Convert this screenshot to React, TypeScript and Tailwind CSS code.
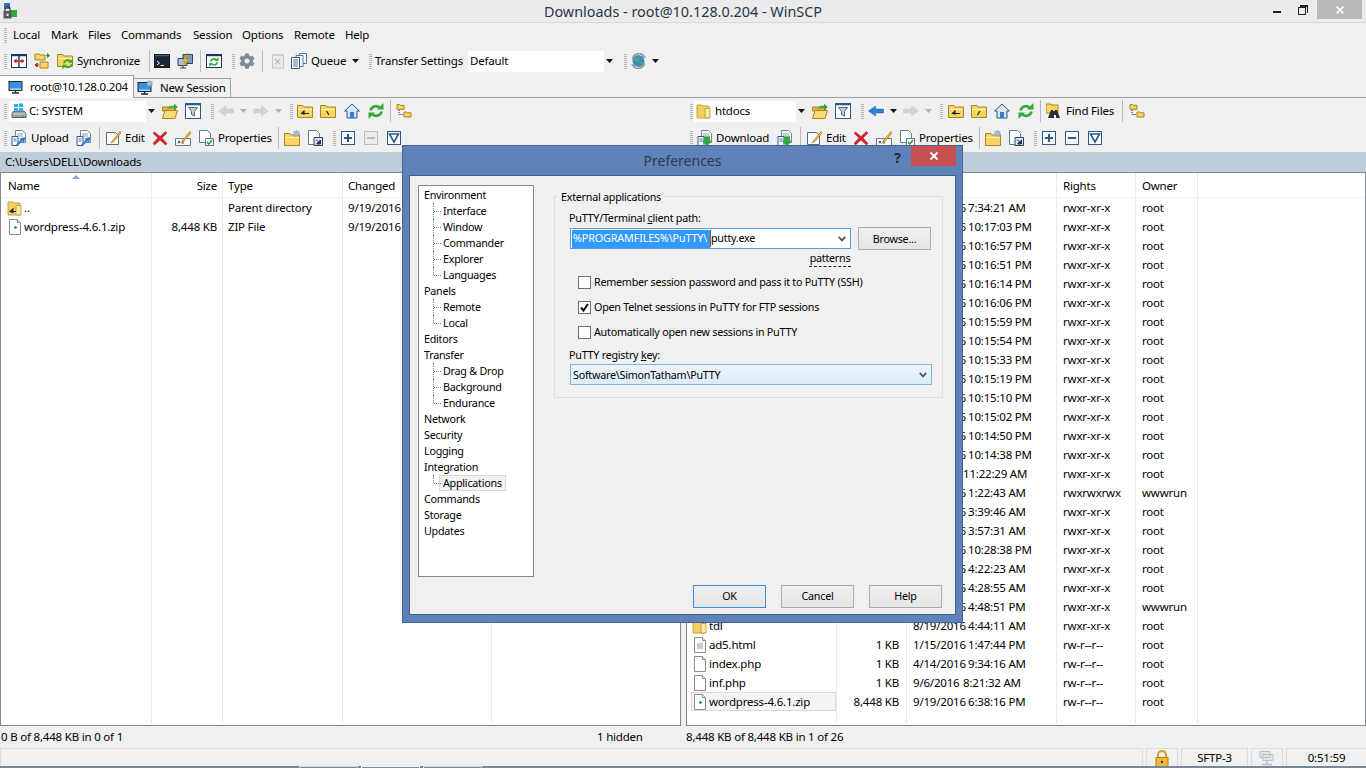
import type { ReactNode } from "react";
import clsx from "clsx";
import { FaCog } from "react-icons/fa";

type IcProps = { className?: string; children?: ReactNode };

function Ic({ className, children }: IcProps) {
  return (
    <svg viewBox="0 0 16 16" className={clsx("h-4 w-4 shrink-0", className)}>
      {children}
    </svg>
  );
}

const Body = ({ x = 0, y = 0 }: { x?: number; y?: number }) => (
  <g transform={`translate(${x} ${y})`}>
    <path d="M.5 2.5h5.5l1 1.5h8.5v10.5H.5z" fill="#f7d560" stroke="#a9861f" />
    <path d="M1.5 6.5h13.5" stroke="#fff3b8" />
  </g>
);

const Arrows = ({ color = "#35a83a" }: { color?: string }) => (
  <g fill="none" stroke={color} strokeWidth="2.6">
    <path d="M2.5 7.5a5.5 5.5 0 0 1 9-3" />
    <path d="M13.5 8.5a5.5 5.5 0 0 1-9 3" />
    <path d="M9 6.5h6.5V0z" fill={color} stroke="none" />
    <path d="M7 9.5H.5V16z" fill={color} stroke="none" />
  </g>
);

const Compare = ({ className }: IcProps) => (
  <Ic className={className}>
    <rect x=".5" y="1.5" width="15" height="13" fill="#fff" stroke="#17375e" />
    <path d="M.5 2.5h15M8 2v12" stroke="#17375e" strokeWidth="1.4" />
    <path d="M3.5 8h9" stroke="#c0242b" strokeWidth="1.6" />
    <path d="M5.5 5.5 2.5 8l3 2.5zM10.5 5.5l3 2.5-3 2.5z" fill="#c0242b" />
  </Ic>
);
const SyncDirs = ({ className }: IcProps) => (
  <Ic className={className}>
    <path d="M1 1h4l1 1h5v5H1z" fill="#f7d560" stroke="#a9861f" />
    <path d="M6 9h8v6H6z" fill="#f7d560" stroke="#a9861f" />
    <path d="M12 2.5h3.5M15.5 2.5l-2-2v4z" stroke="#2fa037" fill="#2fa037" />
    <path d="M1 12h4M1 12l2.2-2v4z" stroke="#c0242b" fill="#c0242b" />
  </Ic>
);
const SyncFolder = ({ className }: IcProps) => (
  <Ic className={className}>
    <Body y={-1} />
    <g transform="translate(5 5) scale(.72)">
      <Arrows />
    </g>
  </Ic>
);
const Terminal = ({ className }: IcProps) => (
  <Ic className={className}>
    <rect x=".5" y="1.5" width="15" height="13" fill="#1d2733" stroke="#0f1620" />
    <path d="M1 2.5h14" stroke="#3f5f86" strokeWidth="1.4" />
    <path d="M3 8l2.5 2L3 12M6.5 12.5H10" stroke="#e8edf2" fill="none" />
  </Ic>
);
const Putty = ({ className }: IcProps) => (
  <Ic className={className}>
    <path d="M6 1.5h9.5v9H6z" fill="#7d9cc4" stroke="#2c4366" />
    <path d="M1 5.5h9v7H1z" fill="#a9c3e0" stroke="#2c4366" />
    <path d="M3 15h6M6 12.5V15" stroke="#2c4366" />
    <path d="M10.5 0 5.5 8h2.7L6 14l6-8H9z" fill="#f3c11b" stroke="#a87f06" strokeWidth=".5" />
  </Ic>
);
const RefreshBox = ({ className }: IcProps) => (
  <Ic className={className}>
    <rect x=".5" y="1.5" width="15" height="13" fill="#fff" stroke="#17375e" />
    <path d="M.5 2.5h15" stroke="#17375e" strokeWidth="1.4" />
    <g transform="translate(3 4) scale(.62)">
      <Arrows />
    </g>
  </Ic>
);
const QueueLog = ({ className }: IcProps) => (
  <Ic className={className}>
    <path d="M2.5 2h11v13h-11z" fill="#ececec" stroke="#c6c6c6" />
    <path d="M4 1v2M7 1v2M10 1v2M12.5 1v2" stroke="#b5b5b5" />
    <path d="M5 6l5 5M10 6l-5 5" stroke="#bdbdbd" strokeWidth="1.5" />
  </Ic>
);
const QueueDocs = ({ className }: IcProps) => (
  <Ic className={className}>
    <path d="M8.5.5h7v10h-7z" fill="#fff" stroke="#4b76a8" />
    <path d="M5 2.5h7v11H5z" fill="#fff" stroke="#4b76a8" />
    <path d="M.5 4.5h8v11h-8z" fill="#fff" stroke="#2f5b8e" />
    <path d="M2 7h5M2 9h5M2 11h5M2 13h5" stroke="#4b76a8" />
  </Ic>
);
const Globe = ({ className }: IcProps) => (
  <Ic className={clsx("w-[17px]", className)}>
    <circle cx="8" cy="8" r="6" fill="#3f86c9" />
    <path d="M5 4l3 1 1 2-2 2-3-1zM10 9l3 1-2 3z" fill="#59ad3e" />
    <path d="M2 6a6.5 6.5 0 0 1 11-3.5M14 10a6.5 6.5 0 0 1-11 3.5" stroke="#8c9aa8" strokeWidth="1.6" fill="none" />
    <path d="M12 .5v4.2h3.8zM4 15.5v-4.2H.2z" fill="#8c9aa8" />
  </Ic>
);
const Monitor = ({ className, star }: IcProps & { star?: boolean }) => (
  <Ic className={className}>
    <rect x="1" y="2.5" width="13" height="9" fill="#3b8fe0" stroke="#1f2a38" />
    <path d="M2 9.5h11v1.5H2z" fill="#a9d3f7" />
    <path d="M7.5 11.5v2M4 14h7" stroke="#1f2a38" strokeWidth="1.4" />
    {star && <path d="M12.5 0l.9 1.8 1.9-.5-.6 1.9 1.3 1-1.8.6v1.9l-1.7-1-1.7 1v-1.9l-1.8-.6 1.3-1-.6-1.9 1.9.5z" fill="#a8bed6" stroke="#6f8aa8" strokeWidth=".4" />}
  </Ic>
);
const Drive = ({ className }: IcProps) => (
  <Ic className={className}>
    <path d="M1 10.5 3 8h10l2 2.5v4H1z" fill="#9aa3ab" stroke="#555e66" />
    <path d="M1.5 11h13" stroke="#d5dade" />
    <path d="M11 12.5h2.5" stroke="#3dbb45" strokeWidth="1.2" />
    <path d="M3 1h4v3H3zM8 .5h4v3.5H8zM3 5h4v2.5H3zM8 5h4v2.5H8z" fill="#1bb4ec" />
  </Ic>
);
const OpenFolder = ({ className }: IcProps) => (
  <Ic className={className}>
    <path d="M.5 4h5.5l1 1h6.5v3H.5z" fill="#e2b93d" stroke="#a9861f" />
    <path d="M3 7.5h12.5l-2.5 8H.5z" fill="#f8dc78" stroke="#a9861f" />
    <path d="M5 6c1-3 4-4 7-3V.6l3.8 3.4L12 7.4V5c-3-.5-5 0-7 1z" fill="#3aa63f" />
  </Ic>
);
const Funnel = ({ className, gray }: IcProps & { gray?: boolean }) => (
  <Ic className={className}>
    <rect x=".5" y=".5" width="15" height="15" fill="#fff" stroke={gray ? "#b9b9b9" : "#2c5a8c"} />
    <path d="M.5 1.5h15" stroke={gray ? "#b9b9b9" : "#2c5a8c"} strokeWidth="1.6" />
    <path d="M3.5 4.5h9l-3 4v4.5l-3-1.5v-3z" fill="#c5cbd2" stroke="#5d6670" />
  </Ic>
);
const BackArrow = ({ className, on }: IcProps & { on?: boolean }) => (
  <Ic className={className}>
    <path d="M.5 8 7.5 3v3h8v4h-8v3z" fill={on ? "#2e7fd6" : "#d2d2d2"} stroke={on ? "#1d5da8" : "#c6c6c6"} strokeWidth=".5" />
  </Ic>
);
const FwdArrow = ({ className }: IcProps) => (
  <Ic className={className}>
    <path d="M15.5 8 8.5 3v3h-8v4h8v3z" fill="#d2d2d2" stroke="#c6c6c6" strokeWidth=".5" />
  </Ic>
);
const UpFolder = ({ className }: IcProps) => (
  <Ic className={className}>
    <Body />
    <path d="M7 8 4.5 10.5 7 11zM5 10.5h7" stroke="#1f2a38" fill="#1f2a38" strokeWidth="1.1" />
  </Ic>
);
const RootFolder = ({ className, slash }: IcProps & { slash?: string }) => (
  <Ic className={className}>
    <Body />
    <path d={slash === "/" ? "M6.5 12 9 8" : "M6.5 8 9 12"} stroke="#1f2a38" strokeWidth="1.2" />
  </Ic>
);
const Home = ({ className }: IcProps) => (
  <Ic className={className}>
    <path d="M8 1 .5 8H3v7h10V8h2.5z" fill="#d7e4f2" stroke="#32597f" />
    <path d="M6 9h4v6H6z" fill="#2e7fd6" />
  </Ic>
);
const Refresh = ({ className }: IcProps) => (
  <Ic className={className}>
    <Arrows />
  </Ic>
);
const Tree = ({ className }: IcProps) => (
  <Ic className={clsx("w-[18px]", className)}>
    <path d="M1 1.5h2.5l.7.8H8v4H1z" fill="#f7d560" stroke="#a9861f" />
    <path d="M8 9h2.5l.7.8H15v4.2H8z" fill="#f7d560" stroke="#a9861f" />
    <path d="M3 7v4.5h4" stroke="#222" strokeDasharray="1 1" fill="none" />
  </Ic>
);
const Transfer = ({ className, green, faded }: IcProps & { green?: boolean; faded?: boolean }) => (
  <Ic className={className}>
    <path d="M4.5.5h7l3 3v9h-10z" fill={faded ? "#f7f7f7" : "#fff"} stroke="#7a8793" />
    <path d="M6 4h6M6 6h6" stroke="#8ca3bb" />
    <path d="M1 6.5h6v9H1z" fill="#fff" stroke="#2f5b8e" />
    <path d="M2.5 9h3M2.5 11h3" stroke="#4b76a8" />
    {green ? (
      <path d="M7 16v-4H4.5L10 6.5l5.5 5.5H13v4z" transform="rotate(180 10 11.25)" fill="#35a83a" />
    ) : (
      <path d="M14.5 7 8.5 8.5l1.3 1.3L5 14.5 6.5 16l4.8-4.7 1.7 1.7z" fill="#2e7fd6" />
    )}
  </Ic>
);
const Pencil = () => <path d="M15 1.5 8 10 6 13l3-1.5L15.8 3.2z" fill="#f3b93b" stroke="#9b6a10" strokeWidth=".6" />;
const Edit = ({ className }: IcProps) => (
  <Ic className={className}>
    <path d="M1.5 2.5h9l3 3v9h-12z" fill="#fff" stroke="#4b6a8c" />
    <Pencil />
  </Ic>
);
const Del = ({ className }: IcProps) => (
  <Ic className={className}>
    <path d="M2.5 2 8 6.5 13.5 1.5l1.5 1.5L10 8l5 5.5-1.5 1.5L8 10l-5.5 5L1 13.2 6 8 1 3.2z" fill="#d4242a" stroke="#a81b20" strokeWidth=".5" />
  </Ic>
);
const Rename = ({ className }: IcProps) => (
  <Ic className={className}>
    <path d="M.5 8.5h15v7H.5z" fill="#fff" stroke="#5d7a99" />
    <path d="M3 11l2 2.5M5 11l-2 2.5M8 10v4" stroke="#2c4366" />
    <Pencil />
  </Ic>
);
const Props = ({ className }: IcProps) => (
  <Ic className={className}>
    <path d="M1.5.5h8l3 3v9h-11z" fill="#fff" stroke="#5d7a99" />
    <path d="M7.5 8.5h8v7h-8z" fill="#f4f7fa" stroke="#5d7a99" />
    <path d="M9 12l1.8 2L14 10" stroke="#31a035" strokeWidth="1.6" fill="none" />
  </Ic>
);
const NewFolder = ({ className }: IcProps) => (
  <Ic className={className}>
    <Body y={1} />
    <path d="M12.5 0l.9 1.8 1.9-.5-.6 1.9 1.3 1-1.8.6v1.9l-1.7-1-1.7 1v-1.9l-1.8-.6 1.3-1-.6-1.9 1.9.5z" fill="#a8bed6" stroke="#6f8aa8" strokeWidth=".4" />
  </Ic>
);
const Shortcut = ({ className }: IcProps) => (
  <Ic className={className}>
    <path d="M1.5.5h8l3 3v11h-11z" fill="#fff" stroke="#5d7a99" />
    <path d="M7 7.5h8.5v8H7z" fill="#dfe7ef" stroke="#2c4366" />
    <path d="M9 9.5l4 4M13.5 10v4h-4z" stroke="#17375e" fill="#17375e" />
  </Ic>
);
const SqPlus = ({ className, minus, gray }: IcProps & { minus?: boolean; gray?: boolean }) => {
  const c = gray ? "#bdbdbd" : "#2c5a8c";
  return (
    <svg viewBox="0 0 14 14" className={clsx("h-[14px] w-[14px] shrink-0", className)}>
      <rect x=".5" y=".5" width="13" height="13" fill={gray ? "#ececec" : "#f7fafd"} stroke={c} />
      <path d={minus ? "M3 7h8" : "M3 7h8M7 3v8"} stroke={c} strokeWidth="2" />
    </svg>
  );
};
const SqFilter = ({ className }: IcProps) => (
  <svg viewBox="0 0 14 14" className={clsx("h-[14px] w-[14px] shrink-0", className)}>
    <rect x=".5" y=".5" width="13" height="13" fill="#f7fafd" stroke="#2c5a8c" />
    <path d="M2.5 3h9L7 11z" fill="#fff" stroke="#2c5a8c" strokeWidth="1.6" />
  </svg>
);
const Binoculars = ({ className }: IcProps) => (
  <Ic className={className}>
    <path d="M0 1h5l1 1h6v8H0z" fill="#f7d560" stroke="#a9861f" />
    <path d="M5 7h2v1h2V7h2l3 8H10v-3H8v3H2z" fill="#2b2f35" />
  </Ic>
);
const FileZip = ({ className }: IcProps) => (
  <Ic className={className}>
    <path d="M2.5.5h8l3 3v12h-11z" fill="#fff" stroke="#8b8b8b" />
    <path d="M10.5.5v3h3" fill="#eee" stroke="#8b8b8b" />
    <path d="M7 8.5h3M8.5 7v3" stroke="#26a635" strokeWidth="1.3" />
  </Ic>
);
const FilePlain = ({ className, lines }: IcProps & { lines?: boolean }) => (
  <Ic className={className}>
    <path d="M2.5.5h8l3 3v12h-11z" fill="#fff" stroke="#8b8b8b" />
    <path d="M10.5.5v3h3" fill="#eee" stroke="#8b8b8b" />
    {lines && <path d="M5 7h6M5 9h6M5 11h6" stroke="#9a9a9a" />}
  </Ic>
);
const FolderPlain = ({ className, parent }: IcProps & { parent?: boolean }) => (
  <Ic className={className}>
    <path d="M1 2h5l1 1h6v12H1z" fill="#f3cf63" stroke="#c9a23a" />
    <path d="M9 5.5h5v9.5H9z" fill="#fbe9a6" stroke="#c9a23a" />
    {parent && <path d="M6 9 3 11.5 6 12.5zM4 11.5h5" stroke="#1f2a38" fill="#1f2a38" strokeWidth="1.1" />}
  </Ic>
);
const Lock = ({ className }: IcProps) => (
  <svg viewBox="0 0 14 18" className={clsx("h-[18px] w-[14px] shrink-0", className)}>
    <path d="M3 8V5a4 4 0 0 1 8 0v3" fill="none" stroke="#d6a21e" strokeWidth="2" />
    <rect x="1" y="7.5" width="12" height="10" fill="#f0b93a" stroke="#b57f12" />
    <circle cx="7" cy="12" r="1.2" fill="#5a3f08" />
  </svg>
);
const Network = ({ className }: IcProps) => (
  <Ic className={className}>
    <path d="M1 1.5h10v6H1zM4 4.5h10v6H4z" fill="#dfe3e6" stroke="#b9bfc4" />
    <path d="M8 10.5v3M3 14.5h10" stroke="#b9bfc4" strokeWidth="1.6" />
  </Ic>
);
const AppIcon = () => (
  <svg viewBox="0 0 16 16" className="h-4 w-4">
    <path d="M2 0h6v6H2z" fill="#2e6fd0" />
    <path d="M8 7h7v7H8z" fill="#35a83a" />
    <path d="M3 8V6a2.5 2.5 0 0 1 5 0v2" stroke="#444" strokeWidth="1.3" fill="none" />
    <rect x="1.5" y="8" width="8" height="7.5" fill="#55585c" />
    <rect x="4.5" y="10.5" width="2" height="2.5" fill="#ddd" />
  </svg>
);

const Caret = ({ className }: IcProps) => (
  <svg viewBox="0 0 7 4" className={clsx("h-1 w-[7px] shrink-0", className)}>
    <path d="M0 0h7L3.5 4z" fill="#111" />
  </svg>
);
const GrayCaret = ({ className }: IcProps) => (
  <svg viewBox="0 0 7 4" className={clsx("h-1 w-[7px] shrink-0", className)}>
    <path d="M0 0h7L3.5 4z" fill="#b0b0b0" />
  </svg>
);
const Chevron = ({ className }: IcProps) => (
  <svg viewBox="0 0 8 6" className={clsx("h-[6px] w-2 shrink-0", className)}>
    <path d="M.8.8 4 4.4 7.2.8" fill="none" stroke="#555" strokeWidth="1.8" />
  </svg>
);

const Grip = ({ className }: IcProps) => (
  <div
    className={clsx(
      "h-[15px] w-[3px] shrink-0 bg-[repeating-linear-gradient(to_bottom,#b4b4b4_0,#b4b4b4_1px,transparent_1px,transparent_2px)]",
      className,
    )}
  />
);
const Sep = ({ className }: IcProps) => <div className={clsx("h-[22px] w-px shrink-0 bg-[#b9b9b9]", className)} />;

const Label = ({ className, children }: IcProps) => (
  <span className={clsx("shrink-0 whitespace-nowrap", className)}>{children}</span>
);

function Combo({ className, icon, text, iconGap }: { className: string; icon: ReactNode; text: string; iconGap: string }) {
  return (
    <div className={clsx("flex h-[21px] shrink-0 items-center bg-white", className)}>
      <span className="ml-[2px] shrink-0">{icon}</span>
      <span className={clsx("flex-1 whitespace-nowrap", iconGap)}>{text}</span>
      <span className="flex h-full w-[11px] items-center justify-center bg-[#f0f0f0]">
        <Caret />
      </span>
    </div>
  );
}

function FileOps({ minusGray }: { minusGray?: boolean }) {
  return (
    <>
      <Sep className="ml-[7px]" />
      <Edit className="ml-[5px]" />
      <Label className="ml-[4px] w-[20px]">Edit</Label>
      <Del className="ml-[7px]" />
      <Rename className="ml-[7px]" />
      <Props className="ml-[7px]" />
      <Label className="ml-[4px] w-[53px]">Properties</Label>
      <Sep className="ml-[7px]" />
      <NewFolder className="ml-[5px]" />
      <Shortcut className="ml-[7px]" />
      <Grip className="ml-[10px]" />
      <SqPlus className="ml-[5px]" />
      <SqPlus minus gray={minusGray} className="ml-[9px]" />
      <SqFilter className="ml-[9px]" />
    </>
  );
}

type Col = { width: string; align?: string };

const leftCols: Col[] = [
  { width: "w-[151px] pl-[7px]" },
  { width: "w-[71px] pr-[5px]", align: "text-right" },
  { width: "w-[120px] pl-[5px]" },
  { width: "w-[149px] pl-[5px]" },
];
const remoteCols: Col[] = [
  { width: "w-[150px] pl-[5px]" },
  { width: "w-[70px] pr-[7px]", align: "text-right" },
  { width: "w-[150px] pl-[6px]" },
  { width: "w-[79px] pl-[6px]" },
  { width: "w-[62px] pl-[6px]" },
];

function HeaderRow({ cols, titles }: { cols: Col[]; titles: string[] }) {
  return (
    <div className="flex h-[25px] shrink-0 border-b border-[#eef3f9]">
      {cols.map((c, i) => (
        <div
          key={titles[i]}
          className={clsx("flex items-center whitespace-nowrap border-r border-[#e4ebf4] pt-px", c.width, c.align === "text-right" && "justify-end")}
        >
          {titles[i]}
        </div>
      ))}
      <div className="flex-1" />
    </div>
  );
}

function Filler({ cols }: { cols: Col[] }) {
  return (
    <div className="flex min-h-0 flex-1 pb-[2px]">
      {cols.map((c, i) => (
        <div key={i} className={clsx("border-r border-[#e4ebf4]", c.width)} />
      ))}
    </div>
  );
}

function Cells({ cols, cells }: { cols: Col[]; cells: ReactNode[] }) {
  return (
    <div className="flex h-[19px] shrink-0">
      {cols.map((c, i) => (
        <div key={i} className={clsx("flex items-center whitespace-nowrap border-r border-[#e4ebf4]", c.width, c.align === "text-right" && "justify-end")}>
          {cells[i]}
        </div>
      ))}
    </div>
  );
}

const When = ({ d, t, short }: { d: string; t: string; short?: boolean }) => (
  <>
    <span className={short ? "w-[50px]" : "w-[55px]"}>{d}</span>
    <span>{t}</span>
  </>
);

const hiddenRows: [string, string, string?, string?, boolean?][] = [
  ["9/18/2016", "7:34:21 AM"],
  ["9/18/2016", "10:17:03 PM"],
  ["9/18/2016", "10:16:57 PM"],
  ["9/18/2016", "10:16:51 PM"],
  ["9/18/2016", "10:16:14 PM"],
  ["9/18/2016", "10:16:06 PM"],
  ["9/18/2016", "10:15:59 PM"],
  ["9/18/2016", "10:15:54 PM"],
  ["9/18/2016", "10:15:33 PM"],
  ["9/18/2016", "10:15:19 PM"],
  ["9/18/2016", "10:15:10 PM"],
  ["9/18/2016", "10:15:02 PM"],
  ["9/18/2016", "10:14:50 PM"],
  ["9/18/2016", "10:14:38 PM"],
  ["9/6/2016", "11:22:29 AM", "rwxr-xr-x", "root", true],
  ["9/18/2016", "1:22:43 AM", "rwxrwxrwx", "wwwrun"],
  ["9/18/2016", "3:39:46 AM"],
  ["9/18/2016", "3:57:31 AM"],
  ["9/18/2016", "10:28:38 PM"],
  ["9/18/2016", "4:22:23 AM"],
  ["9/18/2016", "4:28:55 AM"],
  ["9/18/2016", "4:48:51 PM", "rwxr-xr-x", "wwwrun"],
];

function NameCell({ icon, name, selected, shift }: { icon: ReactNode; name: string; selected?: boolean; shift: string }) {
  return (
    <div className={clsx("flex h-full flex-1 items-center border", shift, selected ? "border-[#d9d9d9] bg-[#f5f5f5]" : "border-transparent")}>
      {icon}
      <span className="ml-[1px]">{name}</span>
    </div>
  );
}

function LeftPane() {
  return (
    <div className="flex w-[681px] shrink-0 flex-col">
      <div className="flex h-[26px] shrink-0 items-center">
        <Grip className="ml-[4px]" />
        <Combo className="ml-[2px] w-[148px]" icon={<Drive />} text="C: SYSTEM" iconGap="ml-[2px]" />
        <OpenFolder className="ml-[5px]" />
        <Funnel className="ml-[7px]" />
        <Grip className="ml-[10px]" />
        <BackArrow className="ml-[4px]" />
        <GrayCaret className="ml-[6px]" />
        <FwdArrow className="ml-[6px]" />
        <GrayCaret className="ml-[6px]" />
        <Grip className="ml-[8px]" />
        <UpFolder className="ml-[4px]" />
        <RootFolder className="ml-[7px]" />
        <Home className="ml-[8px]" />
        <Refresh className="ml-[8px]" />
        <Sep className="ml-[6px]" />
        <Tree className="ml-[4px]" />
      </div>
      <div className="flex h-[28px] shrink-0 items-center">
        <Grip className="ml-[4px]" />
        <Transfer className="ml-[4px]" />
        <Label className="ml-[4px] w-[38px]">Upload</Label>
        <Transfer faded className="ml-[7px]" />
        <FileOps minusGray />
      </div>
      <div className="flex h-[20px] shrink-0 items-center bg-[#bfccd9] pl-[5px]">C:\Users\DELL\Downloads</div>
      <div className="relative flex min-h-0 flex-1 flex-col border border-[#82878f] bg-white">
        <HeaderRow cols={leftCols} titles={["Name", "Size", "Type", "Changed"]} />
        <Cells
          cols={leftCols}
          cells={[<NameCell key="n" shift="-ml-[2px]" icon={<FolderPlain parent />} name=".." />, "", "Parent directory", "9/19/2016"]}
        />
        <Cells
          cols={leftCols}
          cells={[<NameCell key="n" shift="-ml-[2px]" icon={<FileZip />} name="wordpress-4.6.1.zip" />, "8,448 KB", "ZIP File", "9/19/2016"]}
        />
        <Filler cols={leftCols} />
        {/* sort mark sits on top of the header cell */}
        <svg viewBox="0 0 8 4" className="absolute left-[71px] top-[2px] h-1 w-2">
          <path d="M0 4h8L4 0z" fill="#7fa8cc" />
        </svg>
      </div>
      <div className="flex h-[22px] shrink-0 items-center pl-px">
        <span className="w-[596px]">0 B of 8,448 KB in 0 of 1</span>
        <span>1 hidden</span>
      </div>
    </div>
  );
}

function RightPane() {
  return (
    <div className="flex min-w-0 flex-1 flex-col">
      <div className="flex h-[26px] shrink-0 items-center">
        <Grip className="ml-[4px]" />
        <Combo className="ml-[1px] w-[113px]" icon={<FolderPlain />} text="htdocs" iconGap="ml-[3px]" />
        <OpenFolder className="ml-[5px]" />
        <Funnel className="ml-[7px]" />
        <Grip className="ml-[10px]" />
        <BackArrow on className="ml-[4px]" />
        <Caret className="ml-[6px]" />
        <FwdArrow className="ml-[6px]" />
        <GrayCaret className="ml-[6px]" />
        <Grip className="ml-[8px]" />
        <UpFolder className="ml-[5px]" />
        <RootFolder slash="/" className="ml-[7px]" />
        <Home className="ml-[7px]" />
        <Refresh className="ml-[8px]" />
        <Sep className="ml-[6px]" />
        <Binoculars className="ml-[5px]" />
        <Label className="ml-[4px] w-[49px]">Find Files</Label>
        <Sep className="ml-[7px]" />
        <Tree className="ml-[5px]" />
      </div>
      <div className="flex h-[28px] shrink-0 items-center">
        <Grip className="ml-[4px]" />
        <Transfer green className="ml-[4px]" />
        <Label className="ml-[3px] w-[54px]">Download</Label>
        <Transfer green faded className="ml-[7px]" />
        <FileOps />
      </div>
      <div className="h-[20px] shrink-0 bg-[#bfccd9]" />
      <div className="flex min-h-0 flex-1 flex-col border border-[#82878f] bg-white">
        <HeaderRow cols={remoteCols} titles={["Name", "Size", "Changed", "Rights", "Owner"]} />
        {hiddenRows.map(([d, t, rights, owner, short]) => (
          <Cells
            key={t}
            cols={remoteCols}
            cells={["", "", <When key="w" d={d} t={t} short={short} />, rights ?? "rwxr-xr-x", owner ?? "root"]}
          />
        ))}
        <Cells
          cols={remoteCols}
          cells={[<NameCell key="n" shift="-ml-[1px]" icon={<FolderPlain />} name="tdl" />, "", <When key="w" d="8/19/2016" t="4:44:11 AM" />, "rwxr-xr-x", "root"]}
        />
        <Cells
          cols={remoteCols}
          cells={[<NameCell key="n" shift="-ml-[1px]" icon={<FilePlain lines />} name="ad5.html" />, "1 KB", <When key="w" d="1/15/2016" t="1:47:44 PM" />, "rw-r--r--", "root"]}
        />
        <Cells
          cols={remoteCols}
          cells={[<NameCell key="n" shift="-ml-[1px]" icon={<FilePlain />} name="index.php" />, "1 KB", <When key="w" d="4/14/2016" t="9:34:16 AM" />, "rw-r--r--", "root"]}
        />
        <Cells
          cols={remoteCols}
          cells={[<NameCell key="n" shift="-ml-[1px]" icon={<FilePlain />} name="inf.php" />, "1 KB", <When key="w" d="9/6/2016" t="8:21:32 AM" short />, "rw-r--r--", "root"]}
        />
        <Cells
          cols={remoteCols}
          cells={[<NameCell key="n" shift="-ml-[1px]" icon={<FileZip />} name="wordpress-4.6.1.zip" selected />, "8,448 KB", <When key="w" d="9/19/2016" t="6:38:16 PM" />, "rw-r--r--", "root"]}
        />
        <Filler cols={remoteCols} />
      </div>
      <div className="flex h-[22px] shrink-0 items-center">8,448 KB of 8,448 KB in 1 of 26</div>
    </div>
  );
}

const treeData: [string, string[]][] = [
  ["Environment", ["Interface", "Window", "Commander", "Explorer", "Languages"]],
  ["Panels", ["Remote", "Local"]],
  ["Editors", []],
  ["Transfer", ["Drag & Drop", "Background", "Endurance"]],
  ["Network", []],
  ["Security", []],
  ["Logging", []],
  ["Integration", ["Applications"]],
  ["Commands", []],
  ["Storage", []],
  ["Updates", []],
];

function TreeItem({ name, last }: { name: string; last: boolean }) {
  return (
    <div className="relative flex h-4 items-center pl-[19px]">
      <span className={clsx("absolute left-[9px] top-0 border-l border-dotted border-[#7a7a7a]", last ? "h-2" : "h-4")} />
      <span className="absolute left-[10px] top-2 w-[7px] border-t border-dotted border-[#7a7a7a]" />
      {name === "Applications" ? (
        <span className="-ml-[4px] flex h-4 items-center border border-[#d9d9d9] bg-[#f2f2f2] pl-[3px] pr-[3px]">{name}</span>
      ) : (
        name
      )}
    </div>
  );
}

function CheckRow({ label, checked, className }: { label: string; checked?: boolean; className?: string }) {
  return (
    <div className={clsx("flex h-[13px] items-center", className)}>
      <span className="ml-[9px] flex h-[13px] w-[13px] shrink-0 items-center justify-center border border-[#707070] bg-white">
        {checked && (
          <svg viewBox="0 0 11 11" className="h-[11px] w-[11px]">
            <path d="M2 5.5 4.5 8.5 9 2" fill="none" stroke="#111" strokeWidth="2" />
          </svg>
        )}
      </span>
      <span className="ml-[3px] whitespace-nowrap">{label}</span>
    </div>
  );
}

function DlgButton({ label, focus }: { label: string; focus?: boolean }) {
  return (
    <button
      className={clsx(
        "flex h-[23px] w-[73px] items-center justify-center border bg-gradient-to-b from-[#f0f0f0] to-[#e5e5e5]",
        focus ? "border-[#3c8fe0]" : "border-[#acacac]",
      )}
    >
      {label}
    </button>
  );
}

function PreferencesDialog() {
  return (
    <div className="absolute left-[402px] top-[145px] flex h-[478px] w-[561px] flex-col border border-[#45648f] bg-[#5f82b8] px-[6px] pb-[7px] text-[10.75px] tracking-[-0.25px]">
      <div className="relative flex h-[29px] shrink-0 items-center justify-center pb-[1px] text-[14px] tracking-normal text-[#2b3b50]">
        Preferences
        <span className="absolute right-[55px] top-[1px] font-bold text-[#1f2a38]">?</span>
        <span className="absolute right-[0px] top-0 flex h-[20px] w-[45px] items-center justify-center bg-[#c75050]">
          <svg viewBox="0 0 10 10" className="h-[10px] w-[10px]">
            <path d="M1.5 1.5l7 7M8.5 1.5l-7 7" stroke="#fff" strokeWidth="1.8" />
          </svg>
        </span>
      </div>
      <div className="flex min-h-0 flex-1 flex-col border border-[#3f5f8e] bg-[#f0f0f0] pl-[8px] pt-[9px]">
        <div className="flex">
          <div className="h-[392px] w-[116px] shrink-0 border border-[#828790] bg-white pl-[5px] pt-[1px]">
            {treeData.map(([root, kids]) => (
              <div key={root}>
                <div className="flex h-4 items-center">{root}</div>
                {kids.map((k, i) => (
                  <TreeItem key={k} name={k} last={i === kids.length - 1} />
                ))}
              </div>
            ))}
          </div>
          <div className="relative ml-[20px] mt-[11px] flex h-[202px] w-[389px] flex-col border border-[#dcdcdc] pl-[14px] pt-[13px]">
            <span className="absolute left-[3px] top-[-8px] bg-[#f0f0f0] px-[3px] leading-4">External applications</span>
            <div className="h-4 leading-4">
              PuTTY/Terminal <span className="underline">c</span>lient path:
            </div>
            <div className="mt-px flex h-[23px] items-center">
              <div className="ml-px flex h-[21px] w-[281px] items-center border border-[#569de5] bg-white pl-[1px] pr-[4px]">
                <span className="flex h-[18px] w-[138px] items-center overflow-hidden whitespace-nowrap bg-[#3399ff] pl-[1px] tracking-[-0.12px] text-white">
                  %PROGRAMFILES%\PuTTY\
                </span>
                <span className="flex-1 border-l border-[#a05a20]">putty.exe</span>
                <Chevron />
              </div>
              <div className="ml-[7px]">
                <button className="flex h-[23px] w-[73px] items-center justify-center border border-[#acacac] bg-gradient-to-b from-[#f0f0f0] to-[#e5e5e5] pt-px">
                  Browse...
                </button>
              </div>
            </div>
            <div className="ml-[240px] mt-[1px] h-[16px] w-[42px] border-b border-dashed border-[#222] text-center leading-[15px]">patterns</div>
            <CheckRow className="mt-[9px]" label="Remember session password and pass it to PuTTY (SSH)" />
            <CheckRow className="mt-[12px]" label="Open Telnet sessions in PuTTY for FTP sessions" checked />
            <CheckRow className="mt-[12px]" label="Automatically open new sessions in PuTTY" />
            <div className="mt-[8px] h-4 leading-4">
              PuTTY registry <span className="underline">k</span>ey:
            </div>
            <div className="ml-px mt-px flex h-[21px] w-[362px] items-center border border-[#7eb4ea] bg-gradient-to-b from-[#ecf4fc] to-[#dcecfc] pl-[2px] pr-[4px]">
              <span className="flex-1 pt-px">Software\SimonTatham\PuTTY</span>
              <Chevron />
            </div>
          </div>
        </div>
        <div className="mr-[13px] mt-[8px] flex justify-end gap-[15px]">
          <DlgButton label="OK" focus />
          <DlgButton label="Cancel" />
          <DlgButton label="Help" />
        </div>
      </div>
    </div>
  );
}

const menus: [string, string][] = [
  ["Local", "w-[38px]"],
  ["Mark", "w-[37px]"],
  ["Files", "w-[33px]"],
  ["Commands", "w-[72px]"],
  ["Session", "w-[49px]"],
  ["Options", "w-[52px]"],
  ["Remote", "w-[51px]"],
  ["Help", "w-[30px]"],
];

export default function App() {
  return (
    <div className="relative flex h-[768px] w-[1366px] flex-col overflow-hidden bg-[#f0f0f0] font-['Noto_Sans','Open_Sans',sans-serif] text-[11.5px] tracking-[-0.2px] text-black">
      {/* window frame title */}
      <div className="relative flex h-[23px] shrink-0 items-center justify-center border-b border-[#d9d9d9] bg-[#ebebeb] pt-px text-[14.4px] tracking-normal text-[#26374a]">
        <span className="absolute left-[2px] top-[3px]">
          <AppIcon />
        </span>
        Downloads - root@10.128.0.204 - WinSCP
        <div className="absolute right-[4px] top-0 flex items-start">
          <span className="mr-[17px] mt-[11px] h-[2px] w-2 bg-[#222]" />
          <span className="relative mr-[9px] mt-[5px] h-[10px] w-[10px]">
            <span className="absolute left-0 top-[2px] h-2 w-2 border border-[#222]" />
            <span className="absolute left-[2px] top-0 h-2 w-2 border-l-0 border-b-0 border-t-2 border-r border-[#222]" />
          </span>
          <span className="flex h-[19px] w-[45px] items-center justify-center bg-[#b9b9b9]">
            <svg viewBox="0 0 10 10" className="h-[10px] w-[10px]">
              <path d="M1.5 1.5l7 7M8.5 1.5l-7 7" stroke="#fff" strokeWidth="1.6" />
            </svg>
          </span>
        </div>
      </div>

      {/* menu */}
      <div className="flex h-[24px] shrink-0 items-center">
        <Grip className="ml-[4px] mr-[6px]" />
        {menus.map(([m, w]) => (
          <span key={m} className={w}>
            {m}
          </span>
        ))}
      </div>

      {/* main toolbar */}
      <div className="flex h-[28px] shrink-0 items-center">
        <Grip className="ml-[4px]" />
        <Compare className="ml-[4px]" />
        <SyncDirs className="ml-[7px]" />
        <SyncFolder className="ml-[7px]" />
        <Label className="ml-[4px] w-[64px]">Synchronize</Label>
        <Sep className="ml-[8px]" />
        <Terminal className="ml-[4px]" />
        <Putty className="ml-[7px]" />
        <Sep className="ml-[7px]" />
        <RefreshBox className="ml-[5px]" />
        <Grip className="ml-[10px]" />
        <FaCog className="ml-[4px] h-4 w-4 shrink-0 text-[#7f8c99]" />
        <Sep className="ml-[7px]" />
        <QueueLog className="ml-[7px]" />
        <QueueDocs className="ml-[5px]" />
        <Label className="ml-[4px] w-[35px]">Queue</Label>
        <Caret className="ml-[6px]" />
        <Grip className="ml-[10px]" />
        <Label className="ml-[3px] w-[88px]">Transfer Settings</Label>
        <div className="ml-[5px] flex h-[21px] w-[147px] shrink-0 items-center bg-white pl-[2px]">
          <span className="flex-1">Default</span>
          <span className="flex h-full w-[11px] items-center justify-center bg-[#f0f0f0]">
            <Caret />
          </span>
        </div>
        <Grip className="ml-[9px]" />
        <Globe className="ml-[3px]" />
        <Caret className="ml-[5px]" />
      </div>

      {/* session tabs */}
      <div className="flex h-[23px] shrink-0 items-end border-b border-[#a0a0a0]">
        <div className="-mb-px flex h-[23px] w-[134px] items-center border-r border-t border-[#a0a0a0] bg-white pl-[8px]">
          <Monitor />
          <span className="ml-[6px] whitespace-nowrap">root@10.128.0.204</span>
        </div>
        <div className="flex h-[19px] w-[97px] items-center border-r border-t border-[#a0a0a0] pl-[3px]">
          <Monitor star />
          <span className="ml-[7px] whitespace-nowrap">New Session</span>
        </div>
      </div>

      {/* panels */}
      <div className="flex min-h-0 flex-1">
        <LeftPane />
        <div className="w-[5px] shrink-0" />
        <RightPane />
      </div>

      {/* session status */}
      <div className="flex h-[18px] shrink-0 gap-[3px] overflow-hidden">
        <div className="flex-1 border border-b-0 border-[#dcdcdc]" />
        <div className="flex w-[32px] justify-center overflow-hidden border border-b-0 border-[#dcdcdc] pt-px">
          <Lock />
        </div>
        <div className="flex w-[67px] items-center justify-center border border-b-0 border-[#dcdcdc]">SFTP-3</div>
        <div className="flex w-[32px] justify-center overflow-hidden border border-b-0 border-[#dcdcdc] pt-px">
          <Network />
        </div>
        <div className="flex w-[80px] items-center justify-center border border-b-0 border-r-0 border-[#dcdcdc]">0:51:59</div>
      </div>

      {/* sliver of what lies under the window */}
      <div className="flex h-[2px] shrink-0 gap-[3px] bg-[#7b8896] pl-[299px]">
        <div className="h-full w-[59px] border-x border-t border-[#cfd6dc]" />
        <div className="h-full w-[59px] border-x border-t border-[#f2f4f6]" />
        <div className="h-full w-[59px] border-x border-t border-[#cfd6dc]" />
      </div>

      <PreferencesDialog />
    </div>
  );
}
